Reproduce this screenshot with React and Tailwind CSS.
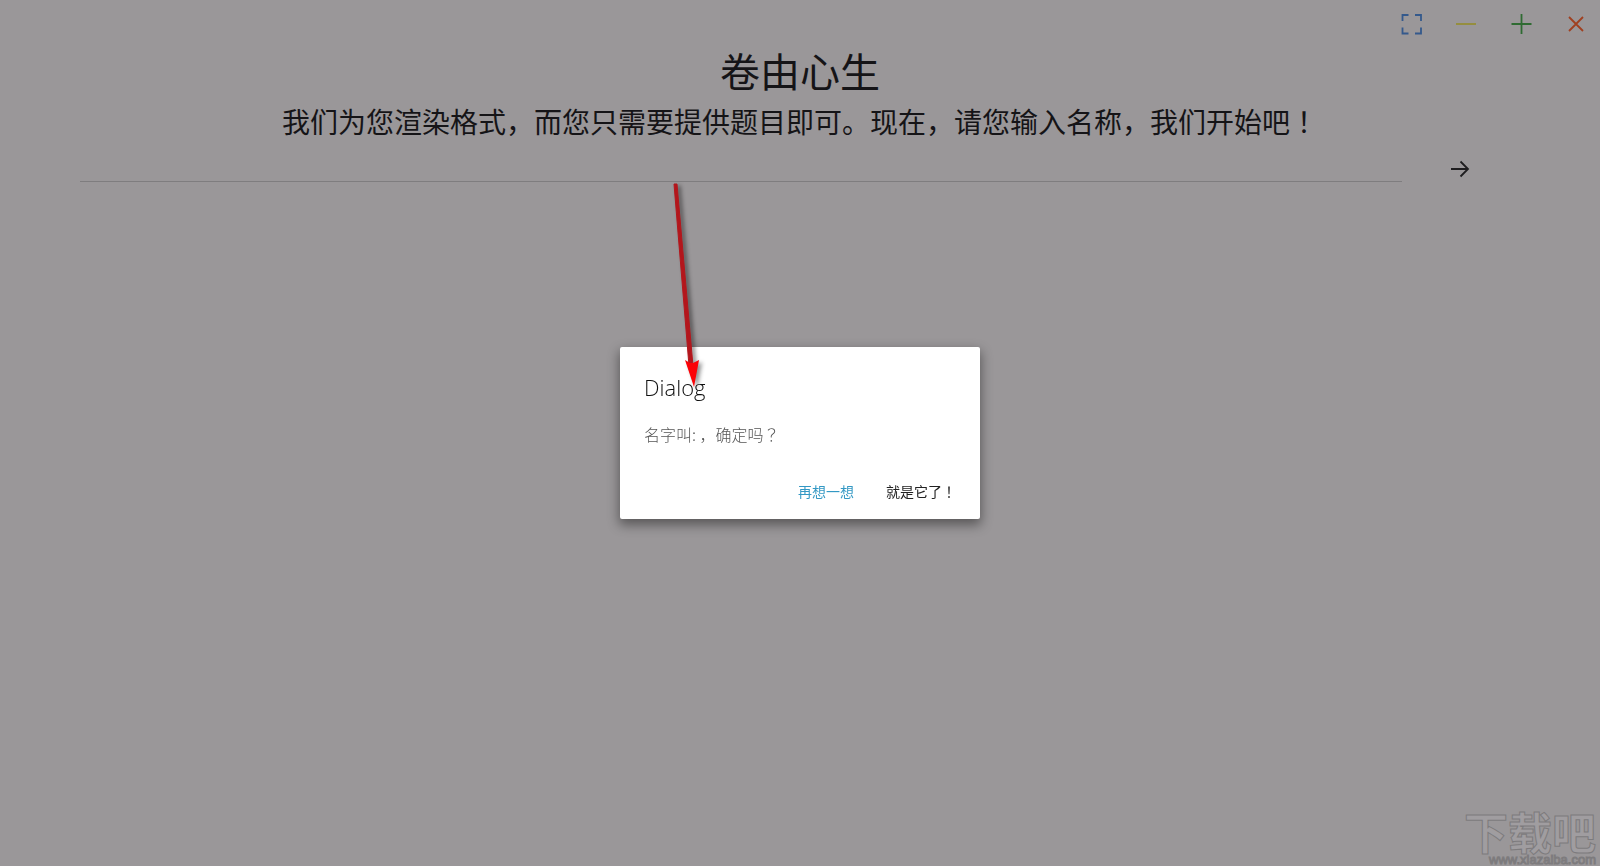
import { useState } from 'react';

const WINDOW_CONTROLS = [
    { label: '全屏', color: 'text-[#34598c]', path: 'M3.5 9V3h6 M16 3h6v6 M22 15.500v6h-6 M9.500 21.500h-6v-6' },
    { label: '最小化', color: 'text-[#958e35]', path: 'M2 12h20' },
    { label: '最大化', color: 'text-[#2f6b32]', path: 'M2.500 12h20 M12.500 2v20' },
    { label: '关闭', color: 'text-[#a04020]', path: 'M5 5l14 14 M19 5L5 19' },
];

function WindowControls() {
    return (
        <div className="flex h-12 justify-end gap-[7px]">
            {WINDOW_CONTROLS.map(({ label, color, path }) => (
                <button key={label} type="button" aria-label={label} className={`flex w-12 items-center justify-center ${color}`}>
                    <svg viewBox="0 0 24 24" className="h-6 w-6" fill="none" stroke="currentColor" strokeWidth="1.8">
                        <path d={path} />
                    </svg>
                </button>
            ))}
        </div>
    );
}

// full-width ！ and ？ sit in the middle of their box with the Japanese glyphs
function Mark({ children }) {
    return (
        <span lang="ja" className="font-['Noto_Sans_CJK_JP',sans-serif]">
            {children}
        </span>
    );
}

function NameForm() {
    const [name, setName] = useState('');

    return (
        <form className="flex items-end pl-[5%]" onSubmit={(e) => e.preventDefault()}>
            <input
                type="text"
                aria-label="名称"
                value={name}
                onChange={(e) => setName(e.target.value)}
                className="h-10 w-[87%] border-b border-[#7f7d7f] bg-transparent text-base outline-none"
            />
            <button type="submit" aria-label="开始" className="ml-12 flex h-6 w-6 items-center justify-center text-[#1f1e20]">
                <svg viewBox="0 0 24 24" className="h-6 w-6" fill="none" stroke="currentColor" strokeWidth="1.8">
                    <path d="M1 11h17 M10.500 3.500l7.500 7.500-7.500 7.500" />
                </svg>
            </button>
        </form>
    );
}

function ConfirmDialog() {
    return (
        <div className="fixed inset-0 flex items-center justify-center">
            <div
                role="dialog"
                aria-labelledby="dialog-title"
                className="w-[360px] rounded-xs bg-white px-6 pt-6 pb-2.5 shadow-[0_5px_12px_1px_rgba(0,0,0,0.42)]"
            >
                <h2 id="dialog-title" className="font-['Open_Sans','Noto_Sans_CJK_SC',sans-serif] text-[22px] leading-8 font-light text-[#111]">
                    Dialog
                </h2>
                <p className="mt-5 text-base leading-[22px] font-light text-[#555]">
                    名字叫: ，确定吗<Mark>？</Mark>
                </p>
                <div className="mt-7 flex h-9 justify-end gap-1">
                    <button type="button" className="px-3.5 text-sm text-[#3398c4]">再想一想</button>
                    <button type="button" className="pl-3.5 text-sm text-[#222]">
                        就是它了<Mark>！</Mark>
                    </button>
                </div>
            </div>
        </div>
    );
}

function PointerArrow() {
    return (
        <svg viewBox="0 0 60 220" className="pointer-events-none absolute top-[180px] left-[660px] h-[220px] w-[60px] drop-shadow-[3px_2px_2px_rgba(0,0,0,0.45)]">
            <path d="M14 4h3L33 186h-4z" fill="#b3161c" stroke="#b3161c" />
            <path d="M25 180l5 3 3 0 6-3-5 27z" fill="#fb0207" />
        </svg>
    );
}

function Watermark() {
    return (
        <div className="pointer-events-none absolute right-0 bottom-0 flex flex-col items-end pr-1">
            <span className="text-[44px] leading-[46px] font-bold whitespace-nowrap text-[#a09da0] [-webkit-text-stroke:1px_#7d7b7d]">下载吧</span>
            <span className="font-['Liberation_Sans',sans-serif] text-[13px] leading-3 text-[#a5a2a5] [-webkit-text-stroke:1px_#7d7b7d]">
                www.xiazaiba.com
            </span>
        </div>
    );
}

export default function App() {
    return (
        <div lang="zh-CN" className="relative min-h-screen overflow-hidden bg-[#9a9799] font-['Noto_Sans_CJK_SC',sans-serif] text-[#151417]">
            <WindowControls />
            <main>
                <header className="text-center">
                    <h1 className="text-[40px] leading-[44px]">卷由心生</h1>
                    <p className="mt-2 text-[28px] leading-[42px]">
                        我们为您渲染格式，而您只需要提供题目即可。现在，请您输入名称，我们开始吧<Mark>！</Mark>
                    </p>
                </header>
                <NameForm />
            </main>
            <Watermark />
            <ConfirmDialog />
            <PointerArrow />
        </div>
    );
}
